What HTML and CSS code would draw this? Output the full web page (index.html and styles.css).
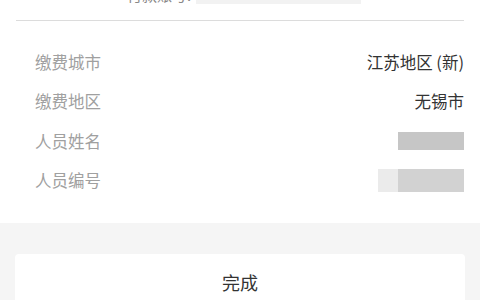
FILE: index.html
```html
<!DOCTYPE html>
<html lang="zh-CN">
<head>
    <meta charset="UTF-8">
    <meta name="viewport" content="width=device-width, initial-scale=1.0">
    <title>缴费信息</title>
    <link rel="stylesheet" href="styles.css">
</head>
<body>
    <div class="info">
        <div class="account">
            <span class="account-label">付款账号:</span>
            <span class="account-mask"></span>
        </div>
        <div class="divider"></div>

        <div class="rows">
            <div class="row">
                <span class="label">缴费城市</span>
                <span class="value">江苏地区 (新)</span>
            </div>
            <div class="row">
                <span class="label">缴费地区</span>
                <span class="value">无锡市</span>
            </div>
            <div class="row">
                <span class="label">人员姓名</span>
                <span class="mask mask-name"></span>
            </div>
            <div class="row">
                <span class="label">人员编号</span>
                <span class="mask mask-id"><i class="mask-light"></i><i class="mask-dark"></i></span>
            </div>
        </div>
    </div>

    <div class="footer-area">
        <button class="done-btn">完成</button>
    </div>
</body>
</html>
```

FILE: styles.css
```css
body, html {
    margin: 0;
    padding: 0;
    height: 100%;
    font-family: "Noto Sans CJK SC", "Noto Sans", sans-serif;
    background: #f5f5f5;
    overflow: hidden;
}

.info {
    background: #fff;
    padding-bottom: 23px;
}

.account {
    display: flex;
    justify-content: center;
    align-items: flex-end;
    gap: 5px;
    height: 18px;
    margin-top: -14px;
    padding-left: 8px;
}

.account-label {
    font-size: 15px;
    line-height: 18px;
    color: #888;
}

.account-mask {
    width: 165px;
    height: 18px;
    background: #f2f2f2;
}

.divider {
    height: 1px;
    margin: 16px 16px 0;
    background: #dcdcdc;
}

.rows {
    padding-top: 21px;
}

.row {
    display: flex;
    justify-content: space-between;
    align-items: center;
    height: 39.5px;
    padding: 0 16px 0 35px;
    font-size: 16.5px;
}

.label {
    color: #a0a0a0;
}

.value {
    color: #333;
}

.mask {
    display: flex;
    filter: blur(0.4px);
}

.mask-name {
    width: 66px;
    height: 18px;
    background: #c6c6c6;
}

.mask-id {
    height: 23px;
}

.mask-light {
    width: 20px;
    background: #ebebeb;
}

.mask-dark {
    width: 66px;
    background: #d2d2d2;
}

.footer-area {
    padding: 31px 15px 0;
}

.done-btn {
    display: block;
    width: 100%;
    height: 56px;
    border: none;
    border-radius: 4px;
    background: #fff;
    color: #333;
    font-family: inherit;
    font-size: 18px;
    padding: 0 0 4px;
    line-height: 56px;
    text-align: center;
}
```
